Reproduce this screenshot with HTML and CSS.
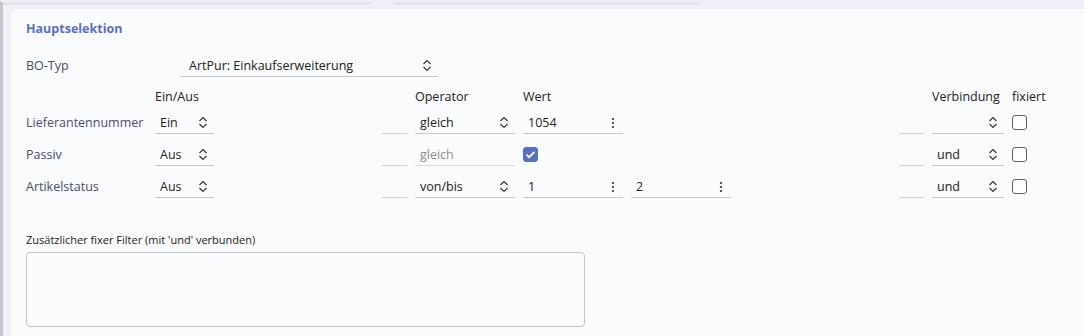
FILE: index.html
```html
<!DOCTYPE html>
<html lang="de">
<head>
    <meta charset="UTF-8">
    <title>Hauptselektion</title>
    <link rel="stylesheet" href="styles.css">
</head>
<body>

<div class="page">
    <div class="top-strip">
        <div class="card-end card-one"></div>
        <div class="card-end card-two"></div>
    </div>

    <div class="panel">
        <div class="panel-title">Hauptselektion</div>

        <div class="bo-row">
            <span class="label">BO-Typ</span>
            <div class="ctl select bo-select">
                <span class="val">ArtPur: Einkaufserweiterung</span>
                <svg class="chev" width="10" height="13" viewBox="0 0 10 13"><path d="M1.5 5 L5 1.5 L8.5 5 M1.5 8 L5 11.5 L8.5 8" fill="none" stroke="#333" stroke-width="1.1"/></svg>
            </div>
        </div>

        <div class="grid">
            <div class="head"></div>
            <div class="head">Ein/Aus</div>
            <div class="head"></div>
            <div class="head"></div>
            <div class="head">Operator</div>
            <div class="head">Wert</div>
            <div class="head"></div>
            <div class="head"></div>
            <div class="head"></div>
            <div class="head">Verbindung</div>
            <div class="head">fixiert</div>

            <!-- Lieferantennummer -->
            <div class="label">Lieferantennummer</div>
            <div class="ctl select"><span class="val">Ein</span><svg class="chev" width="10" height="13" viewBox="0 0 10 13"><path d="M1.5 5 L5 1.5 L8.5 5 M1.5 8 L5 11.5 L8.5 8" fill="none" stroke="#333" stroke-width="1.1"/></svg></div>
            <div></div>
            <div class="ctl blank"></div>
            <div class="ctl select"><span class="val">gleich</span><svg class="chev" width="10" height="13" viewBox="0 0 10 13"><path d="M1.5 5 L5 1.5 L8.5 5 M1.5 8 L5 11.5 L8.5 8" fill="none" stroke="#333" stroke-width="1.1"/></svg></div>
            <div class="ctl input"><span class="val">1054</span><svg class="dots" width="4" height="12" viewBox="0 0 4 12"><circle cx="2" cy="2" r="1.1" fill="#333"/><circle cx="2" cy="6" r="1.1" fill="#333"/><circle cx="2" cy="10" r="1.1" fill="#333"/></svg></div>
            <div></div>
            <div></div>
            <div class="ctl blank"></div>
            <div class="ctl select"><span class="val"></span><svg class="chev" width="10" height="13" viewBox="0 0 10 13"><path d="M1.5 5 L5 1.5 L8.5 5 M1.5 8 L5 11.5 L8.5 8" fill="none" stroke="#333" stroke-width="1.1"/></svg></div>
            <div class="cell"><span class="check"></span></div>

            <!-- Passiv -->
            <div class="label">Passiv</div>
            <div class="ctl select"><span class="val">Aus</span><svg class="chev" width="10" height="13" viewBox="0 0 10 13"><path d="M1.5 5 L5 1.5 L8.5 5 M1.5 8 L5 11.5 L8.5 8" fill="none" stroke="#333" stroke-width="1.1"/></svg></div>
            <div></div>
            <div class="ctl blank"></div>
            <div class="ctl disabled"><span class="val">gleich</span></div>
            <div class="cell">
                <span class="check checked"><svg width="11" height="9" viewBox="0 0 11 9"><path d="M1.5 4.6 L4.2 7.2 L9.5 1.8" fill="none" stroke="#fff" stroke-width="1.8"/></svg></span>
            </div>
            <div></div>
            <div></div>
            <div class="ctl blank"></div>
            <div class="ctl select"><span class="val">und</span><svg class="chev" width="10" height="13" viewBox="0 0 10 13"><path d="M1.5 5 L5 1.5 L8.5 5 M1.5 8 L5 11.5 L8.5 8" fill="none" stroke="#333" stroke-width="1.1"/></svg></div>
            <div class="cell"><span class="check"></span></div>

            <!-- Artikelstatus -->
            <div class="label">Artikelstatus</div>
            <div class="ctl select"><span class="val">Aus</span><svg class="chev" width="10" height="13" viewBox="0 0 10 13"><path d="M1.5 5 L5 1.5 L8.5 5 M1.5 8 L5 11.5 L8.5 8" fill="none" stroke="#333" stroke-width="1.1"/></svg></div>
            <div></div>
            <div class="ctl blank"></div>
            <div class="ctl select"><span class="val">von/bis</span><svg class="chev" width="10" height="13" viewBox="0 0 10 13"><path d="M1.5 5 L5 1.5 L8.5 5 M1.5 8 L5 11.5 L8.5 8" fill="none" stroke="#333" stroke-width="1.1"/></svg></div>
            <div class="ctl input"><span class="val">1</span><svg class="dots" width="4" height="12" viewBox="0 0 4 12"><circle cx="2" cy="2" r="1.1" fill="#333"/><circle cx="2" cy="6" r="1.1" fill="#333"/><circle cx="2" cy="10" r="1.1" fill="#333"/></svg></div>
            <div class="ctl input"><span class="val">2</span><svg class="dots" width="4" height="12" viewBox="0 0 4 12"><circle cx="2" cy="2" r="1.1" fill="#333"/><circle cx="2" cy="6" r="1.1" fill="#333"/><circle cx="2" cy="10" r="1.1" fill="#333"/></svg></div>
            <div></div>
            <div class="ctl blank"></div>
            <div class="ctl select"><span class="val">und</span><svg class="chev" width="10" height="13" viewBox="0 0 10 13"><path d="M1.5 5 L5 1.5 L8.5 5 M1.5 8 L5 11.5 L8.5 8" fill="none" stroke="#333" stroke-width="1.1"/></svg></div>
            <div class="cell"><span class="check"></span></div>
        </div>

        <div class="extra-label">Zusätzlicher fixer Filter (mit 'und' verbunden)</div>
        <div class="extra-box"></div>
    </div>
</div>

</body>
</html>
```

FILE: styles.css
```css
* {
    box-sizing: border-box;
}
body {
    margin: 0;
    font-family: "Open Sans", "Noto Sans", sans-serif;
    font-size: 12.5px;
    color: #222;
    background-color: #eff0f5;
    overflow: hidden;
}
.page {
    height: 336px;
    border-left: 3px solid #c6c7cc;
    padding-left: 8px;
}
.top-strip {
    height: 9px;
    display: flex;
    margin-left: -11px;
}
.card-end {
    height: 3px;
    background-color: #eceef3;
    border-radius: 0 0 6px 6px;
    box-shadow: 0 1px 2px rgba(0, 0, 0, 0.12);
}
.card-one {
    width: 370px;
}
.card-two {
    width: 307px;
    margin-left: 23px;
}
.panel {
    height: 327px;
    background-color: #fafbfd;
    border-radius: 6px 0 0 0;
    box-shadow: 0 0 2px rgba(0, 0, 0, 0.06);
    padding: 11px 0 0 15px;
}
.panel-title {
    font-weight: bold;
    font-size: 12.5px;
    color: #5a6fc4;
    height: 18px;
    line-height: 18px;
}
.label {
    color: #48506a;
    white-space: nowrap;
    line-height: 22px;
}
.bo-row {
    display: flex;
    margin-top: 17px;
    height: 22px;
}
.bo-row .label {
    width: 154px;
}
.bo-select {
    width: 258px;
}
.grid {
    display: grid;
    grid-template-columns: 121px 59px 152px 25px 100px 100px 100px 152px 25px 72px auto;
    grid-template-rows: 13px repeat(3, 22px);
    column-gap: 8px;
    row-gap: 10px;
    margin-top: 12px;
}
.head {
    line-height: 16px;
    height: 16px;
    white-space: nowrap;
    color: #222;
}
.ctl {
    display: flex;
    align-items: center;
    height: 22px;
    border-bottom: 1px solid #c5c6ca;
    padding: 0 6px 0 5px;
}
.ctl .val {
    flex: 1;
    white-space: nowrap;
}
.bo-select .val {
    padding-left: 4px;
}
.chev {
    flex: none;
}
.dots {
    flex: none;
    margin-right: 2px;
}
.blank {
    border-bottom-color: #cfd0d4;
}
.disabled {
    color: #8a8d95;
    border-bottom-color: #dcdde0;
}
.cell {
    display: flex;
    align-items: center;
    height: 22px;
}
.check {
    width: 15px;
    height: 15px;
    border: 1px solid #5f6168;
    border-radius: 3px;
    background-color: #fff;
    display: flex;
    align-items: center;
    justify-content: center;
    margin-top: -1px;
}
.check.checked {
    background-color: #5a6fc4;
    border-color: #5a6fc4;
}
.extra-label {
    font-size: 11px;
    margin-top: 34px;
    color: #222;
    height: 16px;
    line-height: 16px;
}
.extra-box {
    width: 559px;
    height: 75px;
    margin-top: 4px;
    border: 1px solid #c4c5c9;
    border-radius: 4px;
    background-color: #fafbfd;
}
```
